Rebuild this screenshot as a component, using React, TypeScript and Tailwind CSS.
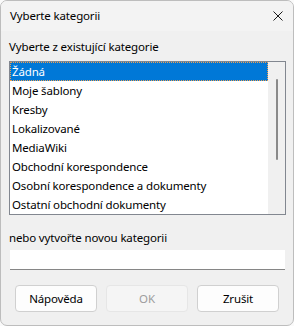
import React from "react";

const items = [
  "Žádná",
  "Moje šablony",
  "Kresby",
  "Lokalizované",
  "MediaWiki",
  "Obchodní korespondence",
  "Osobní korespondence a dokumenty",
  "Ostatní obchodní dokumenty",
];

export default function App() {
  return (
    <div
      className="w-[294px] h-[326px] bg-[#fafafa] text-[11.5px] tracking-[-0.15px] text-black"
      style={{ fontFamily: '"Noto Sans", "Open Sans", sans-serif' }}
    >
      <div className="w-full h-full flex flex-col rounded-[7px] border border-[#bdbdbd] bg-[#f0f0f0] overflow-hidden">
        <div className="h-[30px] shrink-0 bg-[#f3f3f3] flex items-center justify-between pl-[9px] pr-[9px]">
          <span className="leading-[16px]">Vyberte kategorii</span>
          <svg width="10" height="10" viewBox="0 0 10 10" className="mr-[1px]">
            <path d="M0.5 0.5 L9.5 9.5 M9.5 0.5 L0.5 9.5" stroke="#1a1a1a" strokeWidth="1" />
          </svg>
        </div>
        <div className="flex flex-col pl-[8px] pr-[7px] pt-[8px]">
          <div className="leading-[16px]">Vyberte z existující kategorie</div>
          <div className="mt-[6px] h-[154px] border border-[#828790] bg-white flex">
            <div className="flex-1 flex flex-col">
              {items.map((it, i) => (
                <div
                  key={it}
                  className={
                    i === 0
                      ? "h-[19px] shrink-0 pl-[2px] leading-[19px] bg-[#0078d7] text-white outline outline-1 outline-dotted outline-[#f0a050] -outline-offset-1 whitespace-nowrap"
                      : "h-[19px] shrink-0 pl-[2px] leading-[19px] whitespace-nowrap"
                  }
                >
                  {it}
                </div>
              ))}
            </div>
            <div className="w-[17px] shrink-0 bg-[#f0f0f0] flex justify-center pt-[17px]">
              <div className="w-[2px] h-[81px] bg-[#8a8a8a] rounded-full ml-[1px]" />
            </div>
          </div>
          <div className="mt-[15px] leading-[16px]">nebo vytvořte novou kategorii</div>
          <div className="mt-[4px] ml-[1px] mr-[1px] h-[20px] bg-white border-b border-[#868686]" />
          <div className="mt-[15px] flex justify-center gap-[9px] pr-[1px]">
            <div className="w-[82px] h-[27px] rounded-[4px] border border-[#d0d0d0] bg-[#fdfdfd] flex items-center justify-center">
              Nápověda
            </div>
            <div className="w-[82px] h-[27px] rounded-[4px] border border-[#e6e6e6] bg-[#f5f5f5] text-[#9d9d9d] flex items-center justify-center">
              OK
            </div>
            <div className="w-[82px] h-[27px] rounded-[4px] border border-[#d0d0d0] bg-[#fdfdfd] flex items-center justify-center">
              Zrušit
            </div>
          </div>
        </div>
      </div>
    </div>
  );
}
